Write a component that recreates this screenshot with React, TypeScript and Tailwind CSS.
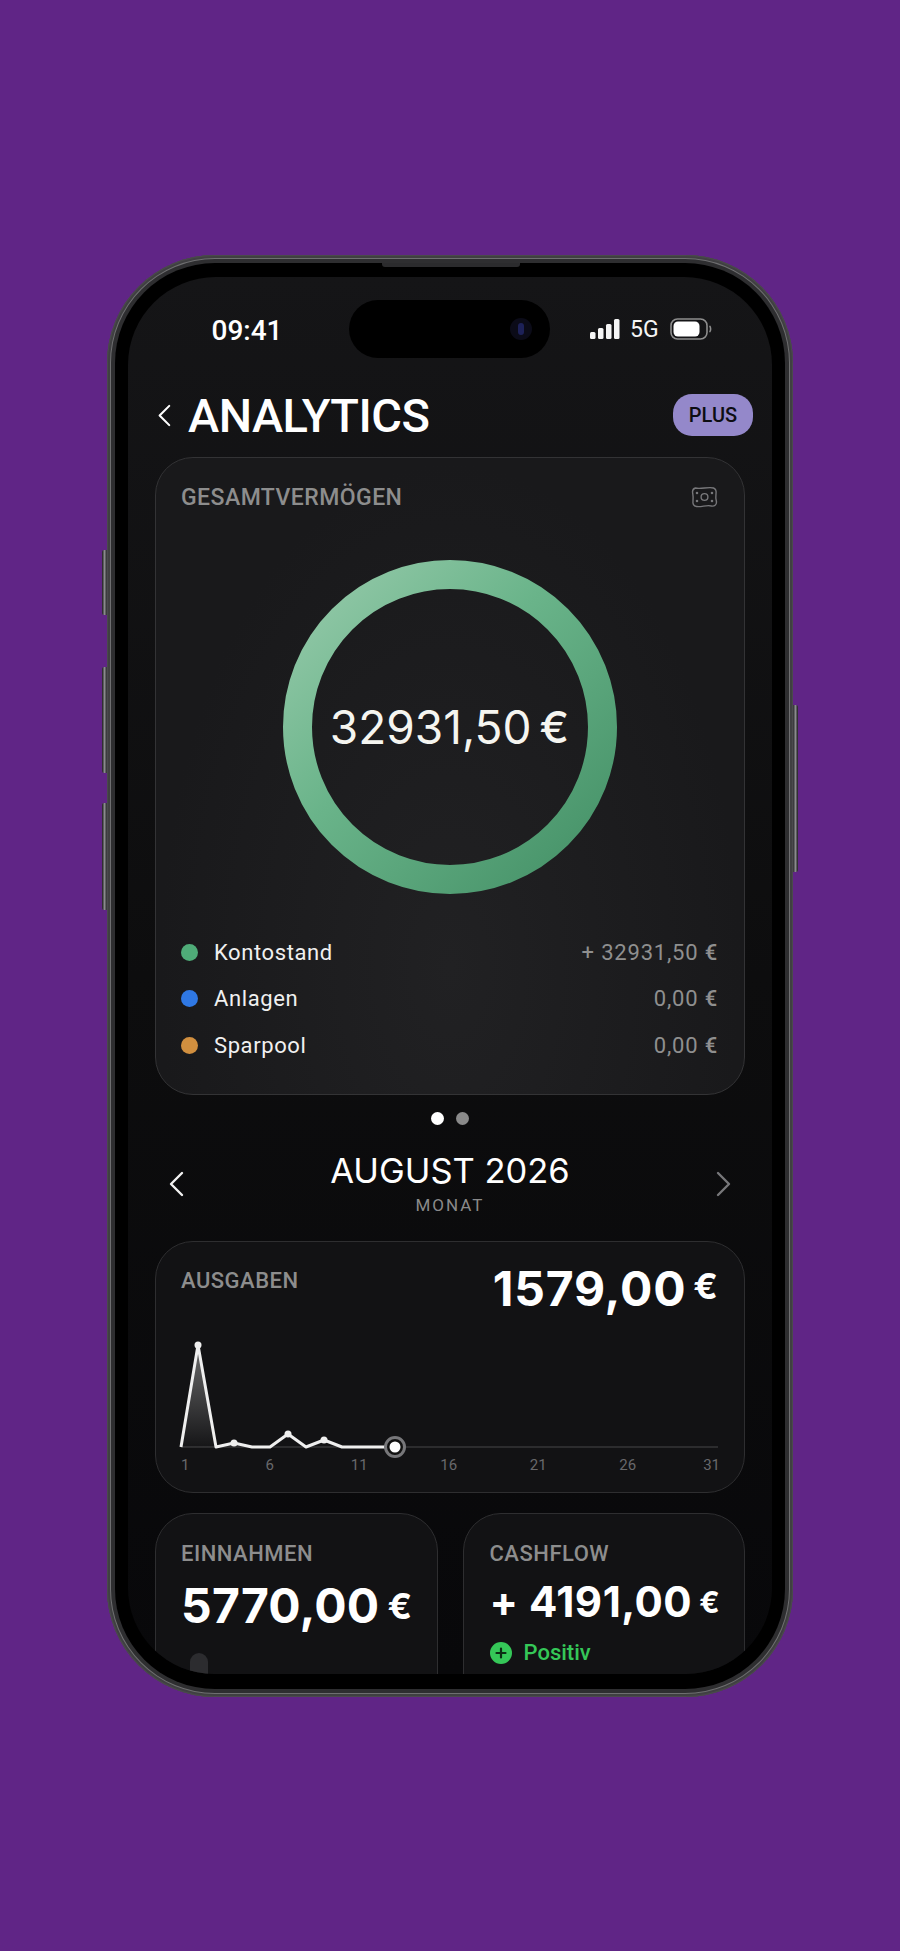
import React from "react";

const legend = [
  { name: "Kontostand", value: "+ 32931,50", dot: "bg-[#4fac78]" },
  { name: "Anlagen", value: "0,00", dot: "bg-[#2f78e4]" },
  { name: "Sparpool", value: "0,00", dot: "bg-[#d18f3f]" },
];

const ticks = ["6", "11", "16", "21", "26"];

function Chevron({ left, className }: { left?: boolean; className: string }) {
  return (
    <svg viewBox="0 0 16 26" fill="none" stroke="currentColor" strokeWidth="2.4" strokeLinecap="round" strokeLinejoin="round" className={className}>
      <path d={left ? "M14 2 L3 13 L14 24" : "M2 2 L13 13 L2 24"} />
    </svg>
  );
}

function Ring() {
  return (
    <svg viewBox="0 0 334 334" className="w-[334px] h-[334px]">
      <defs>
        <linearGradient id="ring" x1="0.1" y1="0.1" x2="0.9" y2="0.9">
          <stop offset="0" stopColor="#8cc5a3" />
          <stop offset="0.4" stopColor="#6ab48a" />
          <stop offset="1" stopColor="#4a966c" />
        </linearGradient>
      </defs>
      <circle cx="167" cy="167" r="152.5" fill="none" stroke="url(#ring)" strokeWidth="29" />
    </svg>
  );
}

function SpendChart() {
  return (
    <svg viewBox="0 0 564 122" className="w-[564px] h-[122px] block -ml-[2px]">
      <defs>
        <linearGradient id="spark" x1="0" y1="0" x2="0" y2="1">
          <stop offset="0" stopColor="#8a8a8a" stopOpacity="0.75" />
          <stop offset="1" stopColor="#8a8a8a" stopOpacity="0.03" />
        </linearGradient>
      </defs>
      <path d="M2 106 H539" stroke="#2c2c2e" strokeWidth="2" />
      <path d="M2 106 L19 4 L37 106 Z" fill="url(#spark)" />
      <path
        d="M2 106 L19 4 L37 106 L55 102 L73 106 L91 106 L109 93 L127 106 L145 99 L163 106 L216 106"
        fill="none"
        stroke="#efefef"
        strokeWidth="3"
        strokeLinejoin="round"
      />
      <circle cx="19" cy="4" r="3.5" fill="#efefef" />
      <circle cx="55" cy="102" r="3.5" fill="#efefef" />
      <circle cx="109" cy="93" r="3.5" fill="#efefef" />
      <circle cx="145" cy="99" r="3.5" fill="#efefef" />
      <circle cx="216" cy="106" r="9.5" fill="#111" stroke="#77777a" strokeWidth="3" />
      <circle cx="216" cy="106" r="5.5" fill="#fff" />
    </svg>
  );
}

export default function App() {
  return (
    <div className="relative flex justify-center items-start w-full h-[1951px] bg-[#602586] pt-[255px] overflow-hidden font-[Roboto]">
      {/* phone */}
      <div className="relative w-[686px] h-[1442px]">
        <div className="absolute left-[-5px] top-[295px] w-[5px] h-[65px] rounded-l-[2px] bg-gradient-to-r from-[#1c1c1e] via-[#8a8a8d] to-[#2a2a2c]" />
        <div className="absolute left-[-5px] top-[412px] w-[5px] h-[106px] rounded-l-[2px] bg-gradient-to-r from-[#1c1c1e] via-[#8a8a8d] to-[#2a2a2c]" />
        <div className="absolute left-[-5px] top-[548px] w-[5px] h-[107px] rounded-l-[2px] bg-gradient-to-r from-[#1c1c1e] via-[#8a8a8d] to-[#2a2a2c]" />
        <div className="absolute right-[-5px] top-[450px] w-[5px] h-[167px] rounded-r-[2px] bg-gradient-to-l from-[#1c1c1e] via-[#8a8a8d] to-[#2a2a2c]" />

        <div className="w-full h-full rounded-[108px] p-[8px] bg-[#2e2e30] shadow-[inset_0_0_0_1px_#4a4a4c,inset_0_0_0_3px_#404042,inset_0_0_0_4px_#6e6e70]">
          <div className="relative w-full h-full rounded-[100px] bg-black pt-[14px] px-[13px] pb-[15px]">
            <div className="absolute left-[267px] top-0 w-[138px] h-[4px] rounded-b-[3px] bg-[#2b2b2d]" />
            {/* screen */}
            <div className="w-full h-full rounded-t-[88px] rounded-b-[86px] overflow-hidden bg-gradient-to-b from-[#151517] via-[#0d0d0e] to-[#08080a] text-white flex flex-col">
              {/* status bar */}
              <div className="flex pt-[23px] shrink-0">
                <div className="w-[221px] pl-[17px] pt-[3px] flex items-center justify-center text-[28px] font-medium">09:41</div>
                <div className="relative w-[201px] h-[58px] rounded-full bg-black">
                  <div className="absolute left-[161px] top-[18px] w-[22px] h-[22px] rounded-full bg-[#0b0b18] flex items-center justify-center">
                    <div className="w-[6px] h-[12px] rounded-full bg-[#1d2158]" />
                  </div>
                </div>
                <div className="flex-1 pl-[40px] flex items-center text-[#f5f5f5]">
                  <svg viewBox="0 0 30 20" className="w-[30px] h-[20px]" fill="currentColor">
                    <rect x="0" y="13" width="5.5" height="7" rx="1.5" />
                    <rect x="8" y="9" width="5.5" height="11" rx="1.5" />
                    <rect x="16" y="5" width="5.5" height="15" rx="1.5" />
                    <rect x="24" y="0" width="5.5" height="20" rx="1.5" />
                  </svg>
                  <span className="ml-[10px] text-[23px] leading-none">5G</span>
                  <svg viewBox="0 0 42 22" className="ml-[11px] w-[42px] h-[22px]" fill="none">
                    <rect x="1" y="1" width="36" height="20" rx="6.5" stroke="#8d8d8d" strokeWidth="1.6" />
                    <rect x="3.5" y="3.5" width="26" height="15" rx="4.5" fill="#fff" />
                    <path d="M39.5 8 C41 9 41 13 39.5 14" stroke="#8d8d8d" strokeWidth="1.6" />
                  </svg>
                </div>
              </div>

              {/* header */}
              <div className="flex items-center mt-[36px] pl-[29px] pr-[19px] h-[42px] shrink-0">
                <Chevron left className="w-[14px] h-[23px] text-white" />
                <h1 className="ml-[17px] text-[47px] leading-none font-medium tracking-[-0.5px]">ANALYTICS</h1>
                <div className="ml-auto w-[80px] h-[42px] rounded-[19px] bg-[#9488ca] flex items-center justify-center text-[#0d0d12] text-[20px] font-medium">PLUS</div>
              </div>

              <div className="px-[27px] flex flex-col shrink-0">
                {/* wealth card */}
                <div className="mt-[21px] h-[638px] rounded-[38px] border border-[#333335] bg-[radial-gradient(ellipse_at_50%_80%,#212123_0%,#19191b_70%)] pt-[27px] pl-[25px] pr-[26px]">
                  <div className="flex items-center justify-between h-[24px]">
                    <span className="text-[23px] leading-none text-[#8d8d8d] font-medium tracking-[0.45px]">GESAMTVERMÖGEN</span>
                    <svg viewBox="0 0 26 22" className="w-[27px] h-[22px]" fill="none" stroke="#77777a" strokeWidth="1.4">
                      <path d="M4 2 C9 3.5 17 0.5 22 2 C24.5 3 25 5 24.5 8 C24 11 24.5 14 25 16 C25 19 23 20.5 20 20 C15 18.5 10 21.5 5 20.5 C2 20 1 18 1.5 15 C2 11 1.5 9 1 6 C1 4 2 2.5 4 2 Z" />
                      <circle cx="13" cy="11" r="3.4" />
                      <circle cx="5.5" cy="7" r="0.6" fill="#77777a" />
                      <circle cx="5.5" cy="15" r="0.6" fill="#77777a" />
                      <circle cx="20.5" cy="7" r="0.6" fill="#77777a" />
                      <circle cx="20.5" cy="15" r="0.6" fill="#77777a" />
                    </svg>
                  </div>
                  <div className="relative flex justify-center mt-[51px] -mx-[5px]">
                    <Ring />
                    <div className="absolute inset-0 flex items-center justify-center font-[Inter] text-[46px] text-[#f5f5f0]">
                      32931,50<span className="ml-[8px] text-[44px] font-medium">€</span>
                    </div>
                  </div>
                  <div className="mt-[45px] flex flex-col gap-[20.5px]">
                    {legend.map((l) => (
                      <div key={l.name} className="flex items-center h-[26px]">
                        <span className={`w-[17px] h-[17px] rounded-full ${l.dot}`} />
                        <span className="ml-[16px] text-[22px] tracking-[0.6px] text-[#f0f0f0]">{l.name}</span>
                        <span className="ml-auto text-[22px] tracking-[0.8px] text-[#8f8f8f]">
                          {l.value} <span className="font-medium">€</span>
                        </span>
                      </div>
                    ))}
                  </div>
                </div>

                {/* pager */}
                <div className="mt-[17px] flex justify-center gap-[12px]">
                  <span className="w-[13px] h-[13px] rounded-full bg-white" />
                  <span className="w-[13px] h-[13px] rounded-full bg-[#8a8a8a]" />
                </div>

                {/* month */}
                <div className="mt-[27px] flex items-center justify-between px-[13px]">
                  <Chevron left className="w-[16px] h-[26px] text-[#f2f2f2]" />
                  <div className="flex flex-col items-center">
                    <span className="font-[Inter] text-[34.5px] leading-[38px] text-white">AUGUST 2026</span>
                    <span className="mt-[5px] text-[17px] leading-[20px] tracking-[2px] text-[#8a8a8a]">MONAT</span>
                  </div>
                  <Chevron className="w-[16px] h-[26px] text-[#77777a]" />
                </div>

                {/* spending card */}
                <div className="mt-[26px] h-[252px] rounded-[38px] border border-[#2e2e30] bg-[#121214] pt-[26px] pl-[25px] pr-[26px]">
                  <div className="flex items-start justify-between h-[52px]">
                    <span className="text-[22px] leading-[26px] text-[#8d8d8d] font-medium tracking-[0.5px]">AUSGABEN</span>
                    <span className="font-[Inter] text-[48px] leading-[42px] font-bold tracking-[0.8px] text-white flex items-start">
                      1579,00<span className="ml-[7px] mt-[-4px] text-[36px] leading-[44px] tracking-normal">€</span>
                    </span>
                  </div>
                  <div className="mt-[21px]">
                    <SpendChart />
                    <div className="-mt-[7px] flex w-[539px] text-[15px] leading-[18px] text-[#68686b]">
                      <span className="w-[44px]">1</span>
                      {ticks.map((t) => (
                        <span key={t} className="w-[89.5px] text-center">{t}</span>
                      ))}
                      <span className="flex-1 text-right">31</span>
                    </div>
                  </div>
                </div>

                {/* bottom cards */}
                <div className="mt-[20px] grid grid-cols-2 gap-[25px]">
                  <div className="h-[200px] rounded-[38px] border border-[#2e2e30] bg-[#121214] pt-[27px] pl-[25px] pr-[20px]">
                    <div className="text-[22px] leading-[26px] text-[#8d8d8d] font-medium tracking-[0.5px]">EINNAHMEN</div>
                    <div className="mt-[11px] font-[Inter] text-[48px] leading-[56px] font-bold tracking-[0.2px] text-white flex items-center">
                      5770,00<span className="ml-[8px] text-[36px] tracking-normal">€</span>
                    </div>
                    <div className="mt-[19px] ml-[9px] w-[18px] h-[30px] rounded-full bg-[#2c2c2f]" />
                  </div>
                  <div className="h-[200px] rounded-[38px] border border-[#2e2e30] bg-[#121214] pt-[27px] pl-[26px] pr-[20px]">
                    <div className="text-[22px] leading-[26px] text-[#8d8d8d] font-medium tracking-[0.5px]">CASHFLOW</div>
                    <div className="mt-[10px] font-[Inter] text-[42px] leading-[50px] font-bold tracking-[0.5px] text-white flex items-center">
                      + 4191,00<span className="ml-[7px] text-[30px] tracking-normal">€</span>
                    </div>
                    <div className="mt-[13px] flex items-center">
                      <span className="w-[22px] h-[22px] rounded-full bg-[#35c758] flex items-center justify-center">
                        <svg viewBox="0 0 12 12" className="w-[12px] h-[12px]" stroke="#0c2c14" strokeWidth="2.2" strokeLinecap="round">
                          <path d="M6 1.5 V10.5 M1.5 6 H10.5" />
                        </svg>
                      </span>
                      <span className="ml-[12px] text-[22px] leading-[26px] font-medium text-[#35c758]">Positiv</span>
                    </div>
                  </div>
                </div>
              </div>
            </div>
          </div>
        </div>
      </div>
    </div>
  );
}
